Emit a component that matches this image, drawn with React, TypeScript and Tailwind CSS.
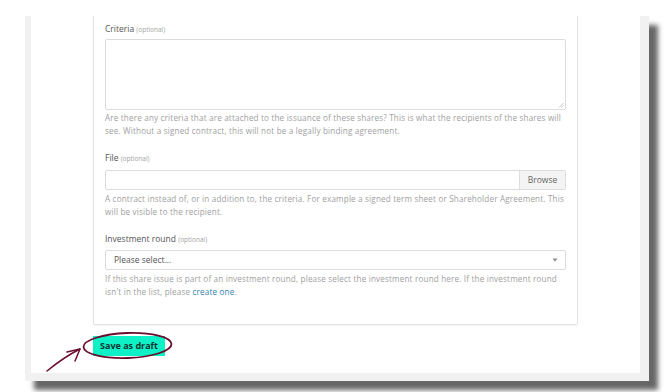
const font = { fontFamily: '"Open Sans", "Liberation Sans", sans-serif' };

function Label({ text }: { text: string }) {
  return (
    <div className="text-[8.5px] leading-[11px] text-[#555]">
      {text} <span className="text-[6.5px] text-[#a3a3a3]">(optional)</span>
    </div>
  );
}

function Help({ children, className = '' }: { children: React.ReactNode; className?: string }) {
  return (
    <p className={`whitespace-nowrap text-[8.1px] leading-[13px] tracking-[0.18px] text-[#a0a0a0] ${className}`}>
      {children}
    </p>
  );
}

function Annotation() {
  return (
    <svg className="pointer-events-none absolute left-0 top-0" width="670" height="392" viewBox="0 0 670 392">
      <g fill="none" stroke="#6a0d2b" strokeLinecap="round" strokeLinejoin="round">
        <ellipse cx="127.5" cy="345.5" rx="44" ry="12.5" strokeWidth="1.8" transform="rotate(-2 127.5 345.5)" />
        <path d="M47 371 C58 362 68 355 80 349" strokeWidth="1.5" />
        <path d="M67 352 L80 349 L75 361" strokeWidth="1.5" />
      </g>
    </svg>
  );
}

export default function App() {
  return (
    <div className="relative h-[392px] w-[670px] overflow-hidden bg-white pl-[25px] pt-[16px]" style={font}>
      <div className="flex h-[365px] w-[624px] flex-col bg-[#f1f1f1] pl-[6px] pr-[9px] pb-[8px] shadow-[9px_9px_5px_rgba(0,0,0,0.6)]">
        <div className="flex-1 bg-white pl-[62px]">
          <div className="w-[485px] rounded-b-[2px] border-x border-b border-[#e4e4e4] px-[11px] pt-[7px] pb-[26px] shadow-[0_1px_2px_rgba(0,0,0,0.05)]">
            <Label text="Criteria" />
            <div className="relative mt-[4px] h-[71px] rounded-[2px] border border-[#dcdcdc]">
              <svg className="absolute bottom-[1px] right-[1px]" width="6" height="6" viewBox="0 0 6 6">
                <path d="M1 5.5 L5.5 1 M3.5 5.5 L5.5 3.5" stroke="#aaa" strokeWidth="0.7" />
              </svg>
            </div>
            <Help className="mt-[1px]">
              Are there any criteria that are attached to the issuance of these shares? This is what the recipients of the shares will
              <br />
              see. Without a signed contract, this will not be a legally binding agreement.
            </Help>

            <div className="mt-[15px]">
              <Label text="File" />
            </div>
            <div className="mt-[6px] flex h-[20px] rounded-[2px] border border-[#dcdcdc]">
              <div className="flex-1" />
              <div className="flex w-[46px] items-center justify-center border-l border-[#dcdcdc] bg-[#f4f4f4] text-[8.5px] text-[#666]">
                Browse
              </div>
            </div>
            <Help className="mt-[2px] leading-[12px]">
              A contract instead of, or in addition to, the criteria. For example a signed term sheet or Shareholder Agreement. This
              <br />
              will be visible to the recipient.
            </Help>

            <div className="mt-[15px]">
              <Label text="Investment round" />
            </div>
            <div className="mt-[5px] flex h-[20px] items-center justify-between rounded-[2px] border border-[#dcdcdc] pl-[8px] pr-[7px]">
              <span className="text-[8.5px] text-[#555]">Please select...</span>
              <svg width="6" height="4" viewBox="0 0 6 4">
                <path d="M0.5 0.5 L5.5 0.5 L3 3.5 Z" fill="#888" />
              </svg>
            </div>
            <Help className="mt-[2px]">
              If this share issue is part of an investment round, please select the investment round here. If the investment round
              <br />
              isn't in the list, please <a className="text-[#2f7fae]">create one</a>.
            </Help>
          </div>

          <button className="mt-[11px] h-[20px] w-[72px] bg-[#0ef0c6] text-[9px] font-bold text-[#123530]">
            Save as draft
          </button>
        </div>
      </div>
      <Annotation />
    </div>
  );
}
